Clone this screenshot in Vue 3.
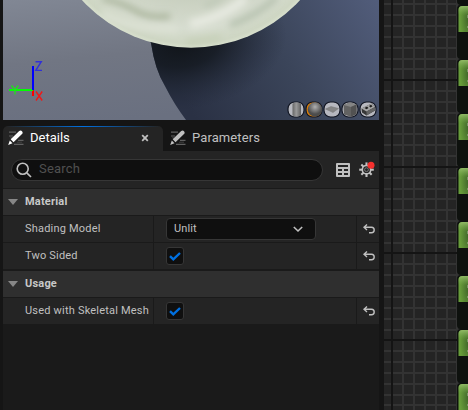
<script setup>
import { ref } from 'vue'

const search = ref('')
const sections = [
  {
    title: 'Material',
    rows: [
      { label: 'Shading Model', type: 'select', value: 'Unlit' },
      { label: 'Two Sided', type: 'check' },
    ],
  },
  { title: 'Usage', rows: [{ label: 'Used with Skeletal Mesh', type: 'check' }] },
]
const tabs = [
  { name: 'Details', active: true },
  { name: 'Parameters', active: false },
]
const minorX = [402, 413, 424, 435, 446, 456]
const majorY = [79, 166, 252, 339]
const minorY = []
for (let k = -7; k < 31; k++) {
  if (k % 8 !== 0) minorY.push(Math.round(79.2 + k * 10.84))
}
const nodes = [-48, 6, 60, 114, 168, 222, 276, 330, 384]
const shapes = ['cylinder', 'sphere', 'plane', 'cube', 'mesh']
</script>

<template>
  <main class="editor">
    <section class="left">
      <div class="viewport">
        <svg class="scene" width="376" height="120" viewBox="3 0 376 120">
          <defs>
            <linearGradient id="floor" x1="0" y1="0" x2="0.3" y2="1">
              <stop offset="0" stop-color="#818794" />
              <stop offset="0.5" stop-color="#717683" />
              <stop offset="1" stop-color="#6a7080" />
            </linearGradient>
            <linearGradient id="shade" gradientUnits="userSpaceOnUse" x1="190" y1="110" x2="379" y2="0">
              <stop offset="0" stop-color="#2a3144" />
              <stop offset="0.5" stop-color="#3b455a" />
              <stop offset="1" stop-color="#525d7b" />
            </linearGradient>
            <radialGradient id="contact" gradientUnits="userSpaceOnUse" cx="0" cy="0" r="1" gradientTransform="translate(182 44) rotate(-8) scale(105 66)">
              <stop offset="0" stop-color="#11151a" />
              <stop offset="0.35" stop-color="#141920" stop-opacity="0.85" />
              <stop offset="1" stop-color="#202737" stop-opacity="0" />
            </radialGradient>
            <radialGradient id="ball" gradientUnits="userSpaceOnUse" cx="191" cy="-101" r="149">
              <stop offset="0.67" stop-color="#c9d0c0" />
              <stop offset="0.87" stop-color="#d6dccf" />
              <stop offset="0.97" stop-color="#ced6c3" />
              <stop offset="1" stop-color="#d8e0cd" />
            </radialGradient>
            <filter id="soft"><feGaussianBlur stdDeviation="3.5" /></filter>
            <clipPath id="ballClip"><circle cx="191" cy="-101" r="148.5" /></clipPath>
          </defs>
          <rect x="3" width="376" height="120" fill="url(#floor)" />
          <path d="M148 36 L151 43 Q155 70 165 86 Q174 104 186 120 H379 V0 H190Z" fill="url(#shade)" />
          <path d="M148 36 L151 43 Q155 70 165 86 Q174 104 186 120 H379 V0 H190Z" fill="url(#contact)" />
          <circle cx="191" cy="-101" r="148.7" fill="url(#ball)" />
          <g clip-path="url(#ballClip)">
            <g filter="url(#soft)" fill="none">
              <path d="M102 -2 Q122 3 136 11 T170 16" stroke="#a5b096" stroke-width="5" />
              <path d="M102 13 Q130 30 178 29" stroke="#dde2d5" stroke-width="7" />
              <path d="M190 24 Q222 18 246 -2" stroke="#e7eae1" stroke-width="9" />
              <path d="M230 25 Q256 16 277 -3" stroke="#adbaa6" stroke-width="5" />
              <path d="M204 5 Q214 4 222 -4" stroke="#bdc7b6" stroke-width="5" />
              <path d="M186 42 Q205 40 221 37" stroke="#c1ccb1" stroke-width="4" />
            </g>
          </g>
          <g fill="none" stroke-width="2">
            <path d="M33 90V96" stroke="#f00" />
            <path d="M9 90H33" stroke="#0f0" />
            <path d="M33 66V90" stroke="#00f" />
          </g>
          <g fill="none" stroke-width="1.4">
            <path d="M35.5 61.7H41.3L35.8 70.4H42" stroke="#3030d8" />
            <path d="M36 91.5L42.2 100.5M42.2 91.5L36 100.5" stroke="#f01818" />
            <path d="M11.5 85.5L15 90L18.3 85.5M15 90V94.5" stroke="#20df20" />
          </g>
        </svg>
        <div class="shapes">
          <svg v-for="s in shapes" :key="s" width="18" height="17" viewBox="0 0 18 17">
            <defs>
              <linearGradient id="cyl"><stop stop-color="#666" /><stop offset=".45" stop-color="#989898" /><stop offset="1" stop-color="#606060" /></linearGradient>
              <radialGradient id="sph" cx=".5" cy=".32"><stop stop-color="#b0b0b0" /><stop offset="1" stop-color="#4c4c4c" /></radialGradient>
            </defs>
            <rect x="1" y="1" width="16" height="15" rx="6.5" :fill="s === 'sphere' ? '#d47b0b' : '#b7b8bf'" stroke="#121622" stroke-width="1.2" />
            <path v-if="s === 'cylinder'" d="M5.5 2.5Q10 .5 14 2.5V14.5Q10 16.5 5.5 14.5Z" fill="url(#cyl)" />
            <circle v-else-if="s === 'sphere'" cx="10" cy="8.5" r="7.2" fill="url(#sph)" />
            <path v-else-if="s === 'plane'" d="M2.5 8L8 5.5L15.5 7.5L10 11.5Z" fill="#858585" stroke="#777" stroke-width=".5" />
            <g v-else-if="s === 'cube'">
              <path d="M2.5 4L9 1.5L15.5 3.5V13L10 15.8L3 13.5Z" fill="#626262" />
              <path d="M2.5 4L9 1.5L15.5 3.5L10 6Z" fill="#858585" />
              <path d="M10 6L15.5 3.5V13L10 15.8Z" fill="#525252" />
            </g>
            <g v-else>
              <path d="M2.5 7.5L12.5 2.5L16 6V9.5L7.5 14.5L3 11.5Z" fill="#373737" />
              <path d="M2.5 7.5L12.5 2.5L16 6L7.5 10.5Z" fill="#a5a5a5" />
              <path d="M5.5 7L8 5.5L9.5 7L7.5 8.3ZM10 5L12 3.8L13.5 5.2L11.5 6.4Z" fill="#1c1c1c" />
              <path d="M7.5 10.5L16 6V9.5L7.5 14.5Z" fill="#646464" />
            </g>
          </svg>
        </div>
      </div>

      <nav class="tabs">
        <div v-for="t in tabs" :key="t.name" class="tab" :class="{ active: t.active }">
          <svg class="pencil" width="16" height="16" viewBox="0 0 16 16">
            <path d="M1 2.2H8M1 6H5M10 10.3H15.5M6 14.3H15.5" stroke="#606060" stroke-width="1.2" />
            <path d="M2 7.8H4M9 12.2H14" stroke="#424242" />
            <path d="M.2 15L1.8 10.5L4.5 13.3ZM2.7 9.3L11.2 1.1Q12.7-.1 14.2 1.4Q15.2 2.8 14 4L5.5 12.3Z" fill="currentColor" />
          </svg>
          <span>{{ t.name }}</span>
          <svg v-if="t.active" class="close" width="8" height="8" viewBox="0 0 8 8"><path d="M1.2 1.2L6.8 6.8M6.8 1.2L1.2 6.8" stroke="#c0c0c0" stroke-width="1.8" /></svg>
        </div>
      </nav>

      <div class="toolbar">
        <label class="search">
          <svg width="16" height="16" viewBox="0 0 16 16"><circle cx="6.7" cy="6.7" r="5.5" fill="none" stroke="#c0c0c0" stroke-width="1.6" /><path d="M10.8 10.8L15 15" stroke="#c0c0c0" stroke-width="1.7" /></svg>
          <input v-model="search" placeholder="Search" />
        </label>
        <svg class="table" width="14" height="14" viewBox="0 0 14 14"><path fill="#c0c0c0" fill-rule="evenodd" d="M1 0H13Q14 0 14 1V13Q14 14 13 14H1Q0 14 0 13V1Q0 0 1 0ZM2 2V4H12V2ZM2 6V8H6V6ZM8 6V8H12V6ZM2 10V12H6V10ZM8 10V12H12V10Z" /></svg>
        <svg class="gear" width="17" height="17" viewBox="0 0 17 17">
          <g stroke="#c0c0c0" fill="none">
            <path v-for="a in [0, 45, 90, 135, 180, 225, 270, 315]" :key="a" d="M7.5 1.2V4.5" stroke-width="2.1" :transform="`rotate(${a} 7.5 8.7) translate(0 .2)`" />
            <circle cx="7.5" cy="8.7" r="4.2" stroke-width="1.6" />
            <circle cx="7.5" cy="8.7" r="1.9" stroke="#777" stroke-width="1" />
          </g>
          <circle cx="12" cy="4.2" r="3.5" fill="#f5302e" />
        </svg>
      </div>

      <section v-for="s in sections" :key="s.title" class="group">
        <h2><svg width="10" height="6" viewBox="0 0 10 6"><path d="M0 0H10L5 6Z" fill="#878787" /></svg>{{ s.title }}</h2>
        <div v-for="r in s.rows" :key="r.label" class="row">
          <div class="label">{{ r.label }}</div>
          <div class="value">
            <button v-if="r.type === 'select'" class="select">
              {{ r.value }}
              <svg width="10" height="7" viewBox="0 0 10 7"><path d="M.8 1L5 5L9.2 1" fill="none" stroke="#c0c0c0" stroke-width="1.6" /></svg>
            </button>
            <span v-else class="check">
              <svg width="12" height="9" viewBox="0 0 12 9"><path d="M1 4.2L4.3 7.3L11 1" fill="none" stroke="#0070e0" stroke-width="2.4" /></svg>
            </span>
          </div>
          <div class="reset">
            <svg width="12" height="10" viewBox="0 0 12 10"><path d="M4 .5L1 3.3L4 6M1.3 3.3H8.5Q11.2 3.5 11.2 6Q11.2 8.7 8.5 8.7H6" fill="none" stroke="#c0c0c0" stroke-width="1.4" /></svg>
          </div>
        </div>
      </section>
    </section>

    <section class="graph">
      <svg width="84" height="410" viewBox="384 0 84 410">
        <defs>
          <radialGradient id="header" cx="1" cy=".55" r=".85"><stop stop-color="#43692a" /><stop offset="1" stop-color="#679c3a" /></radialGradient>
          <linearGradient id="gloss" x2="0" y2="1"><stop stop-color="#a1c676" stop-opacity=".75" /><stop offset=".35" stop-color="#79a952" stop-opacity="0" /></linearGradient>
        </defs>
        <rect x="384" width="84" height="410" fill="#242424" />
        <g fill="#333">
          <rect v-for="x in minorX" :key="x" :x="x" y="0" width="2" height="410" />
          <rect v-for="y in minorY" :key="y" x="384" :y="y" width="84" height="2" />
        </g>
        <g fill="#141414">
          <rect x="391" width="2" height="410" />
          <rect v-for="y in majorY" :key="y" x="384" :y="y" width="84" height="2" />
        </g>
        <g v-for="y in nodes" :key="y">
          <rect x="457" :y="y - 1" width="18" height="54" rx="4" fill="#0e110e" />
          <path :d="`M458.5 ${y + 26}V${y + 4}Q458.5 ${y} 462.5 ${y}H468V${y + 26}Z`" fill="url(#header)" />
          <path :d="`M458.5 ${y + 26}V${y + 4}Q458.5 ${y} 462.5 ${y}H468V${y + 26}Z`" fill="url(#gloss)" />
          <path :d="`M467.5 ${y + 9}V${y + 12}M467.5 ${y + 20}V${y + 22}`" stroke="#9bae8c" stroke-opacity=".6" />
        </g>
      </svg>
    </section>
  </main>
</template>

<style>
body { margin: 0; background: #151515; }
</style>
<style scoped>
* { box-sizing: border-box; }
.editor { display: flex; gap: 5px; width: 468px; height: 410px; padding-left: 3px; overflow: hidden; background: #151515; color: #c0c0c0; font-family: Roboto, sans-serif; }
.left { display: flex; flex-direction: column; width: 376px; background: #1a1a1a; }
.viewport { position: relative; height: 120px; flex: none; }
svg { display: block; flex: none; }
.shapes { position: absolute; left: 284px; top: 101px; display: flex; }
.tabs { display: flex; height: 31px; padding-top: 6px; background: #151515; }
.tab { position: relative; display: flex; align-items: center; width: 160px; padding: 0 14px 2px 9px; font-size: 13px; letter-spacing: .1px; }
.tab .pencil { margin: 0 6px 0 -2px; }
.tab.active { padding-left: 7px; color: #fff; background: #242424; border-radius: 5px 5px 0 0; }
.tab.active span { letter-spacing: 0; }
.tab.active::before { content: ''; position: absolute; inset: 0 3px auto; height: 1px; background: linear-gradient(90deg, transparent, #0070e0 50%, transparent); }
.close { margin-left: auto; }
.toolbar { display: flex; align-items: center; height: 37px; padding: 0 3px 0 8px; background: #242424; }
.search { display: flex; flex: none; align-items: center; gap: 7px; width: 312px; height: 22px; padding-left: 4px; background: #0f0f0f; border: 1px solid #363636; border-radius: 11px; }
.search svg { margin-top: 1px; }
.search input { width: 200px; padding: 0 0 2px; border: 0; outline: 0; background: none; color: #c0c0c0; font: 13px Roboto, sans-serif; letter-spacing: .2px; }
.search input::placeholder { color: #505050; opacity: 1; }
.table { margin-left: 13px; }
.gear { margin-left: 9px; }
.group { border-top: 1px solid #1a1a1a; }
.group + .group { border-top-width: 2px; }
h2 { display: flex; align-items: center; gap: 7px; height: 26px; margin: 0; padding: 0 0 1px 5px; background: #2f2f2f; color: #c8c8c8; font-size: 11px; font-weight: 700; letter-spacing: .2px; }
h2 svg { margin-top: 1px; }
.row { display: grid; grid-template-columns: 150px 202px 22px; gap: 1px; height: 27px; padding-top: 1px; background: #1a1a1a; }
.row > div { display: flex; align-items: center; background: #242424; }
.row .label { padding: 0 0 1px 22px; font-size: 11px; letter-spacing: .2px; white-space: nowrap; }
.row .value { padding-left: 12px; }
.select { display: flex; justify-content: space-between; align-items: center; width: 150px; height: 22px; padding: 0 12px 1px 7px; background: #0f0f0f; border: 1px solid #363636; border-radius: 4px; color: #c0c0c0; font: 11px Roboto, sans-serif; letter-spacing: .1px; }
.select svg { margin-top: 2px; }
.check { display: grid; place-items: center; width: 18px; height: 18px; background: #0f0f0f; border: 1px solid #363636; border-radius: 3px; }
.row .reset { justify-content: center; padding: 0 0 0 2px; }
.graph { width: 84px; flex: none; }
</style>
